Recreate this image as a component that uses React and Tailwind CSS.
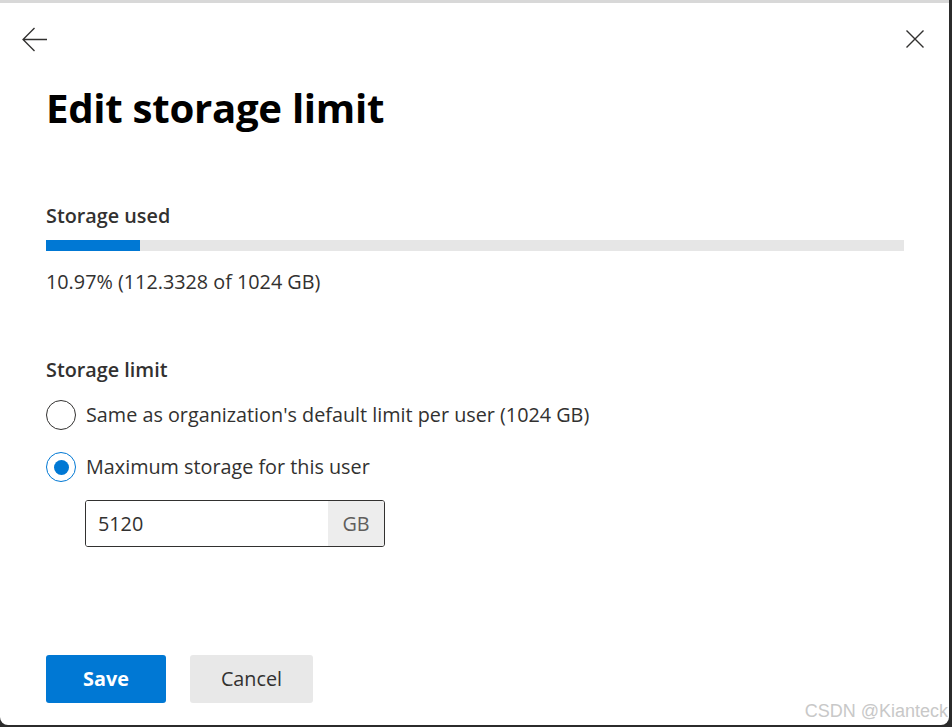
const font = { fontFamily: '"Open Sans", "Noto Sans", sans-serif' };

function Radio({ checked, children }) {
  return (
    <label className="flex items-center gap-[10px] h-[30px] cursor-pointer">
      <span
        className={
          'flex items-center justify-center w-[30px] h-[30px] rounded-full border-[1.5px] bg-white ' +
          (checked ? 'border-[#0078d4]' : 'border-[#323130]')
        }
      >
        {checked && <span className="block w-[15px] h-[15px] rounded-full bg-[#0078d4]" />}
      </span>
      <span className="text-[19.8px] text-[#323130]">{children}</span>
    </label>
  );
}

export default function App() {
  const used = 10.97;

  return (
    <div className="w-[952px] h-[727px] bg-[#2b2b2b] relative" style={font}>
      <div className="w-[949px] h-[725px] bg-white rounded-b-[8px] border-t-[3px] border-[#d8d8d8] flex flex-col">
        {/* Header */}
        <div className="flex items-center justify-between pt-[21px] pl-[22px] pr-[25px] h-[51px]">
          <button className="w-[24px] h-[24px] text-[#323130]">
            <svg viewBox="0 0 24 24" className="w-[25px] h-[25px]" fill="none" stroke="currentColor" strokeWidth="1.3">
              <path d="M1 12h23M12 1L1 12l11 11" />
            </svg>
          </button>
          <button className="w-[18px] h-[18px] text-[#323130]">
            <svg viewBox="0 0 18 18" className="w-[18px] h-[18px]" fill="none" stroke="currentColor" strokeWidth="1.4">
              <path d="M0.5 0.5l17 17M17.5 0.5l-17 17" />
            </svg>
          </button>
        </div>

        <div className="px-[46px] flex flex-col">
          <h1 className="mt-[26px] text-[40.2px] leading-[56px] font-bold text-black tracking-[-0.3px]">
            Edit storage limit
          </h1>

          {/* Storage used */}
          <div className="mt-[67px] text-[19.8px] leading-[26px] font-semibold text-[#323130]">Storage used</div>
          <div className="mt-[11px] h-[11px] w-[858px] bg-[#e6e6e6]">
            <div className="h-full bg-[#0078d4]" style={{ width: used + '%' }} />
          </div>
          <div className="mt-[18px] text-[19.8px] leading-[26px] text-[#323130]">
            10.97% (112.3328 of 1024 GB)
          </div>

          {/* Storage limit */}
          <div className="mt-[62px] text-[19.8px] leading-[26px] font-semibold text-[#323130]">Storage limit</div>
          <div className="mt-[17px] flex flex-col gap-[22px]">
            <Radio>Same as organization's default limit per user (1024 GB)</Radio>
            <Radio checked>Maximum storage for this user</Radio>
          </div>

          <div className="mt-[18px] ml-[39px] flex w-[300px] h-[47px] border border-[#323130] rounded-[3px] overflow-hidden">
            <input
              defaultValue="5120"
              className="flex-1 min-w-0 px-[12px] text-[19.8px] text-[#323130] outline-none bg-white"
              style={font}
            />
            <span className="flex items-center justify-center w-[56px] bg-[#ededed] text-[19.8px] text-[#605e5c]">GB</span>
          </div>
        </div>

        {/* Footer */}
        <div className="mt-auto mb-[22px] px-[46px] flex gap-[24px]">
          <button className="w-[120px] h-[48px] rounded-[3px] bg-[#0078d4] text-white text-[19.8px] font-bold">
            Save
          </button>
          <button className="w-[123px] h-[48px] rounded-[3px] bg-[#e8e8e8] text-[#323130] text-[19.8px] font-medium">
            Cancel
          </button>
        </div>
      </div>

      <span
        className="absolute right-[4px] bottom-[7px] text-[18px] text-[#c8c8c8] leading-none"
        style={{ fontFamily: '"Liberation Sans", Arial, sans-serif' }}
      >
        CSDN @Kianteck
      </span>
    </div>
  );
}
